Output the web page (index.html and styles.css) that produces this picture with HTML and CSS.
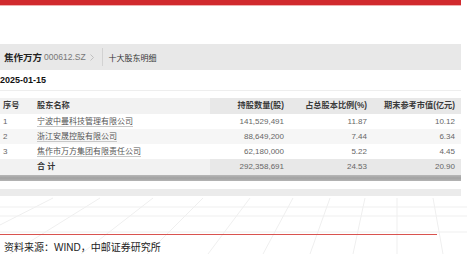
FILE: index.html
```html
<!DOCTYPE html>
<html lang="zh">
<head>
<meta charset="utf-8">
<link rel="stylesheet" href="styles.css">
</head>
<body>
<div class="page">
  <div class="topbar"></div>
  <div class="crumb">
    <span class="stock">焦作万方</span>
    <span class="code">000612.SZ</span>
    <svg class="chev" width="4" height="7" viewBox="0 0 4 7"><polyline points="0.5,0.5 3.5,3.5 0.5,6.5" fill="none" stroke="#bbb" stroke-width="0.9"/></svg>
    <span class="sep"></span>
    <span class="sub">十大股东明细</span>
  </div>
  <div class="date">2025-01-15</div>
  <div class="table">
    <div class="row head">
      <div class="c first">序号</div>
      <div class="c name">股东名称</div>
      <div class="c num">持股数量(股)</div>
      <div class="c num">占总股本比例(%)</div>
      <div class="c num">期末参考市值(亿元)</div>
    </div>
    <div class="row">
      <div class="c first">1</div>
      <div class="c name"><span class="link">宁波中曼科技管理有限公司</span></div>
      <div class="c num">141,529,491</div>
      <div class="c num">11.87</div>
      <div class="c num">10.12</div>
    </div>
    <div class="row alt">
      <div class="c first">2</div>
      <div class="c name"><span class="link">浙江安晟控股有限公司</span></div>
      <div class="c num">88,649,200</div>
      <div class="c num">7.44</div>
      <div class="c num">6.34</div>
    </div>
    <div class="row">
      <div class="c first">3</div>
      <div class="c name"><span class="link">焦作市万方集团有限责任公司</span></div>
      <div class="c num">62,180,000</div>
      <div class="c num">5.22</div>
      <div class="c num">4.45</div>
    </div>
    <div class="row total">
      <div class="c first"></div>
      <div class="c name">合 计</div>
      <div class="c num">292,358,691</div>
      <div class="c num">24.53</div>
      <div class="c num">20.90</div>
    </div>
  </div>
  <div class="scroll"></div>
  <div class="footer">
    <svg class="bg" width="467" height="73" viewBox="0 0 467 73">
      <g stroke="#efefef" stroke-width="1" fill="none">
        <line x1="0" y1="26" x2="467" y2="26"/>
        <line x1="0" y1="35" x2="467" y2="35"/>
        <line x1="0" y1="51" x2="467" y2="51"/>
        <line x1="53" y1="17" x2="-57" y2="73"/>
        <line x1="100" y1="17" x2="10" y2="73"/>
        <line x1="153" y1="17" x2="81" y2="73"/>
        <line x1="203" y1="17" x2="147" y2="73"/>
        <line x1="250" y1="17" x2="208" y2="73"/>
        <line x1="293" y1="17" x2="263" y2="73"/>
        <line x1="330" y1="17" x2="310" y2="73"/>
        <line x1="365" y1="17" x2="353" y2="73"/>
        <line x1="397" y1="17" x2="397" y2="73"/>
        <line x1="433" y1="17" x2="443" y2="73"/>
      </g>
    </svg>
    <div class="band"></div>
    <div class="rule"></div>
    <div class="source">资料来源：WIND，中邮证券研究所</div>
  </div>
</div>
</body>
</html>
```

FILE: styles.css
```css
* { box-sizing: border-box; }
body {
  margin: 0;
  background: #fff;
  font-family: "Liberation Sans", "Noto Sans CJK SC", sans-serif;
}
.page { width: 461px; }
.topbar {
  height: 6px;
  background: #d12a2e;
  border-bottom: 1px solid #f0b0b0;
}
.crumb {
  margin-top: 38px;
  height: 26px;
  background: #e8e8e8;
  display: flex;
  align-items: center;
  padding-left: 4px;
}
.stock { font-weight: bold; font-size: 9.5px; color: #222; }
.code { font-size: 8.5px; color: #777; margin-left: 2px; }
.chev { margin-left: 4px; display: block; }
.sep { width: 1px; height: 18px; background: #d2d2d2; margin-left: 8px; }
.sub { font-size: 8px; color: #333; margin-left: 6px; }
.date {
  height: 20px;
  line-height: 20px;
  font-size: 9px;
  font-weight: bold;
  color: #111;
}
.table {
  border-top: 1px solid #eeeeee;
  padding-top: 7px;
}
.row {
  display: grid;
  grid-template-columns: 37px 173px 80px 83px 88px;
  height: 15px;
  line-height: 15px;
  font-size: 8px;
  color: #666;
}
.row.alt { background: #f6f6f6; }
.row.head, .row.total { height: 16px; line-height: 16px; background: #f2f2f2; }
.row.head .num, .row.total .num { background: #e8e8e8; }
.row.head { color: #3a3a3a; font-weight: bold; font-size: 8.2px; }
.row.total .name { color: #333; font-weight: bold; }
.c { white-space: nowrap; }
.first { padding-left: 3px; }
.num { text-align: right; padding-right: 6px; }
.link {
  color: #555;
  text-decoration: underline;
  text-decoration-color: #c8c8c8;
  text-underline-offset: 2px;
}
.scroll {
  height: 6px;
  background: linear-gradient(#b8b8b8, #a2a2a2 50%, #b4b4b4);
}
.footer {
  position: relative;
  height: 73px;
  width: 467px;
  padding-top: 8px;
}
.bg { position: absolute; left: 0; top: 0; }
.band {
  position: relative;
  width: 461px;
  height: 7px;
  background: #ebebeb;
}
.rule {
  position: relative;
  margin-top: 38px;
  width: 437px;
  height: 1px;
  background: #d9534f;
}
.source {
  position: relative;
  padding-left: 4px;
  padding-top: 6px;
  line-height: 13px;
  font-size: 10px;
  color: #222;
}
```
